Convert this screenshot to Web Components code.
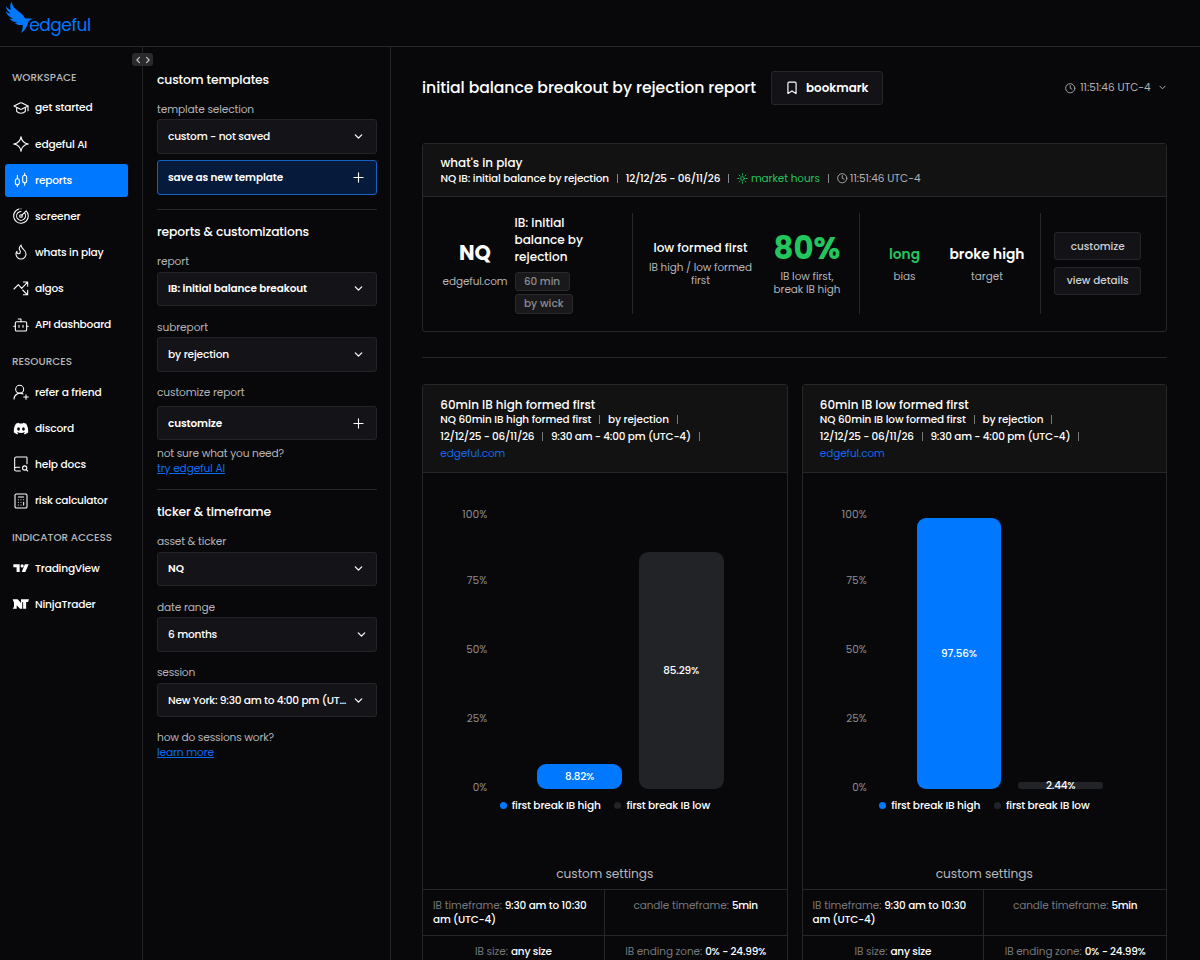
<!DOCTYPE html>
<html lang="en">
<head>
<meta charset="utf-8">
<title>edgeful</title>
<style>
html,body{margin:0;height:100%;overflow:hidden;background:#08080a;color:#fff;font-family:Poppins,Inter,sans-serif;font-size:12px}
</style>
</head>
<body>
<edge-app></edge-app>
<script>
const define=(name,cls)=>customElements.define(name,cls);
const render=(el,html)=>{if(!el.shadowRoot)el.attachShadow({mode:'open'}).innerHTML=html;};

/* Single-line text fitted to a fixed measure: size first, tracking for the rest. */
define('fit-text',class extends HTMLElement{
  connectedCallback(){
    const w=parseFloat(this.getAttribute('w'));
    render(this,`<style>:host{display:inline-block;white-space:pre;flex:none;width:${w}px;text-decoration:inherit}span{display:inline-block;text-decoration:inherit}</style><span><slot></slot></span>`);
    const s=this.shadowRoot.querySelector('span');
    const n=s.getBoundingClientRect().width;
    if(!n)return;
    const k=Math.min(1.05,Math.max(.95,w/n));
    s.style.fontSize=(parseFloat(getComputedStyle(this).fontSize)*k).toFixed(2)+'px';
    const m=s.getBoundingClientRect().width;
    s.style.letterSpacing=((w-m)/this.textContent.length).toFixed(3)+'px';
  }
});
const t=(w,text)=>`<fit-text w="${w}">${text}</fit-text>`;

const ICONS={
  cap:'<path d="M22.500 9 13.500 4.400a3.500 3.500 0 0 0-3 0L1.500 9l9 4.600a3.500 3.500 0 0 0 3 0z"/><path d="M22.500 9v7M5.500 11.500v5.500c1.500 1.800 3.800 2.800 6.500 2.800s5-1 6.500-2.800v-5.500"/>',
  spark:'<path d="M12 1c1 7 4 10 11 11-7 1-10 4-11 11-1-7-4-10-11-11 7-1 10-4 11-11z"/>',
  candles:'<path d="M6.500 5v5M6.500 19v3M17.500 2v3M17.500 16v4"/><rect x="3.500" y="10" width="6" height="9" rx="3"/><rect x="14.500" y="5" width="6" height="11" rx="3"/>',
  radar:'<path d="M19.800 4.200A11 11 0 1 1 3 5.500M3.500 5.500h.01M1.500 9A11 11 0 0 1 9 1.500M12 1h.01M16.900 7.100a6.700 6.700 0 1 1-9.800.3M8 6.700A6.700 6.700 0 0 1 12 5.300M13.400 10.600l6.400-6.400"/><circle cx="12" cy="12" r="2"/>',
  flame:'<path d="M8.500 14.500A2.500 2.500 0 0 0 11 12c0-1.400-.5-2-1-3-1.100-2.100-.2-5.100 2-7.500.5 3 2 5.400 4 7s3.500 4 3.500 6.500a7.500 7.500 0 1 1-15 0c0-1.700.4-3 1.500-4a2.500 2.500 0 0 0 2.500 3.500z"/>',
  algo:'<path d="M1.500 13.500 8 7l5 5.500L21.500 3.500M15.500 3H22v6.500M14.500 15 21 21.500M15.500 22H22v-6.500"/>',
  bot:'<path d="M12 7V3H8"/><rect x="3.500" y="7" width="17" height="14" rx="2"/><path d="M1 14h2.500M20.500 14H23M9 12.500v3M15 12.500v3"/>',
  user:'<path d="M1.500 22.500a9 9 0 0 1 13.500-7.500"/><circle cx="10" cy="8" r="6"/><path d="M19.500 16v7M23 19.500h-7"/>',
  docs:'<path d="M11 22.500H5a2.500 2.500 0 0 1 0-5.500H10M2.500 19.500V4A2.500 2.500 0 0 1 5 1.500h15a1 1 0 0 1 1 1v9"/><circle cx="17.500" cy="18" r="3.200"/><path d="m22 22.500-2.200-2.200"/>',
  calc:'<rect x="3" y="1.500" width="18" height="21" rx="2"/><path d="M8 6h8M16 14v4M8 10h.01M12 10h.01M16 10h.01M8 14h.01M12 14h.01M8 18h.01M12 18h.01"/>',
  discord:'<path fill="currentColor" stroke="none" fill-rule="evenodd" d="M19.500 5.400A17 17 0 0 0 15.300 4l-.7 1.300a16 16 0 0 0-5.200 0L8.700 4a17 17 0 0 0-4.200 1.400C1.700 10 .9 14.400 1.300 18.700A17 17 0 0 0 6.500 21.600l1.200-2.100-1.800-1 .5-.4a12.600 12.600 0 0 0 11.200 0l.5.400-1.800 1 1.200 2.100a17 17 0 0 0 5.200-2.900c.5-5-.7-9.400-3.200-13.300zM8.300 16c-1.100 0-2-1.100-2-2.500s.9-2.500 2-2.500 2 1.100 2 2.500-.9 2.500-2 2.500zm7.400 0c-1.100 0-2-1.100-2-2.500s.9-2.500 2-2.500 2 1.100 2 2.500-.9 2.500-2 2.500z"/>',
  tv:'<g fill="currentColor" stroke="none"><path d="M.500 6.500h9.500v11.500H5.400v-7H.500zM17.800 6.500H23.500L18.500 18h-5.400z"/><circle cx="13.700" cy="8.900" r="2.400"/></g>',
  nt:'<g fill="currentColor" stroke="none"><path d="M-.5 5H7l5 5.500V5h12l-1.500 4h-2.800v10h-4.500V9.500h-1.400V19h-3.300l-5-5v5H-.5l2-3v-6z"/></g>',
  down:'<path d="m5 8.500 7 7 7-7"/>',
  plus:'<path d="M2 12h20M12 2v20"/>',
  mark:'<path d="M19 21.500l-7-4.500-7 4.500V4a2 2 0 0 1 2-2h10a2 2 0 0 1 2 2z"/>',
  clock:'<circle cx="12" cy="12" r="10.500"/><path d="M12 6v6l4 2"/>',
  sun:'<circle cx="12" cy="12" r="4"/><path d="M12 1.500v3M12 19.500v3M1.500 12h3M19.500 12h3M4.500 4.500l2 2M17.500 17.500l2 2M4.500 19.500l2-2M17.500 6.500l2-2"/>',
  code:'<path d="m6 7.500-4.500 4.500 4.500 4.500M18 7.500l4.500 4.500-4.500 4.500"/>'
};
define('edge-icon',class extends HTMLElement{
  connectedCallback(){
    const s=this.getAttribute('size')||16,k=this.getAttribute('stroke')||2;
    render(this,`<style>:host{display:block;flex:none;width:${s}px;height:${s}px}svg{display:block;overflow:visible}</style>
    <svg width="${s}" height="${s}" viewBox="0 0 24 24" fill="none" stroke="currentColor" stroke-width="${k}" stroke-linecap="round" stroke-linejoin="round">${ICONS[this.getAttribute('name')]}</svg>`);
  }
});
const icon=(n,s,k)=>`<edge-icon name="${n}" size="${s}" stroke="${k||2}"></edge-icon>`;

define('edge-header',class extends HTMLElement{
  connectedCallback(){render(this,`<style>
    :host{display:flex;height:46px;border-bottom:1px solid #27272a;box-sizing:content-box;color:#0078ff;padding-left:5px}
    svg{display:block;margin-top:1px}
    .w{font-weight:400;font-size:17.800px;line-height:24px;margin:13px 0 0 -3.800px}
  </style>
  <svg width="28" height="33" viewBox="0 0 28 33" fill="currentColor"><path d="M6.500 .8C8 7.500 12.500 9.500 17 13.200c1.700 1.400 2.600 2.900 3.300 4.600 2-.9 4.700-.8 7.700.3-2.600.3-4.300 1.500-4.900 3.600-.9 3.700-2.600 7.200-7.100 10.300 1.400-3 2-5.800 1.700-8.200-2.900.8-6 0-8.300-2 1.300.3 2.200.1 3-.3-3.300-.4-6.700-2-8.300-4.600 1.600.9 2.900 1.100 4.500.9C5 16.300 1.500 13.700 .8 10.300c1.700 1.500 3 2.100 4.800 2.200C3 10.500 1 8.300 .9 5.200c1.500 1.900 3 3 5 3.700C4.900 6 5 3.200 6.500 .8z"/></svg>
  <div class="w">${t(61.5,'edgeful')}</div>`);}
});

define('nav-item',class extends HTMLElement{
  connectedCallback(){render(this,`<style>
    :host{display:flex;align-items:center;gap:6px;height:33px;margin:0 14px 3.170px 5px;padding-left:8px;border-radius:3px;font-size:11.200px;font-weight:500;color:#fff}
    :host([active]){background:#0078ff}
    div{padding-top:.6px}
  </style>${icon(this.getAttribute('icon'),16,1.6)}<div><slot></slot></div>`);}
});
define('side-nav',class extends HTMLElement{
  connectedCallback(){
    const it=(i,w,n,a='')=>`<nav-item icon="${i}" ${a}>${t(w,n)}</nav-item>`;
    render(this,`<style>
    :host{display:block;border-right:1px solid #232326;padding-top:11.500px;box-sizing:border-box;width:143px}
    h4{margin:0;height:31.200px;box-sizing:border-box;padding:11px 0 0 12px;font-size:10.500px;line-height:16px;font-weight:500;color:#b8b8bc}
    .g{padding-top:1.500px;margin-bottom:-1.300px}
    </style>
    <h4>${t(64.5,'WORKSPACE')}</h4><div class="g">
    ${it('cap',57.5,'get started')}${it('spark',52,'edgeful AI')}${it('candles',37,'reports','active')}${it('radar',45.5,'screener')}${it('flame',68.500,'whats in play')}${it('algo',28.5,'algos')}${it('bot',76,'API dashboard')}</div>
    <h4>${t(60,'RESOURCES')}</h4><div class="g">
    ${it('user',66.5,'refer a friend')}${it('discord',39,'discord')}${it('docs',51,'help docs')}${it('calc',72.500,'risk calculator')}</div>
    <h4>${t(100,'INDICATOR ACCESS')}</h4><div class="g">
    ${it('tv',64.5,'TradingView')}${it('nt',60.500,'NinjaTrader')}</div>`);}
});

define('select-box',class extends HTMLElement{
  connectedCallback(){
    const ic=this.getAttribute('icon')||'down';
    render(this,`<style>
    :host{display:flex;align-items:center;justify-content:space-between;height:34.600px;box-sizing:border-box;border:1px solid #242428;border-radius:3px;background:#141418;padding:0 12px 0 10px;font-size:11.200px;font-weight:500;color:#fff}
    :host([primary]){background:#061b3b;border-color:#1760c4}
    :host([wide]){padding-right:9px}
    :host([strong]){font-weight:600;font-size:11px}
    </style><slot></slot>${ic=='plus'?icon('plus',11,2.400):icon('down',11,2.800)}`);}
});
define('form-field',class extends HTMLElement{
  connectedCallback(){render(this,`<style>
    :host{display:block;margin-bottom:9.500px}
    .l{height:21.500px;line-height:22px;font-size:11.200px;color:#b4b4b8}
    </style><div class="l"><slot name="label"></slot></div><slot></slot>`);}
});
define('config-panel',class extends HTMLElement{
  connectedCallback(){
    const f=(lw,l,w,v,a='')=>`<form-field><span slot="label">${t(lw,l)}</span><select-box ${a}>${t(w,v)}</select-box></form-field>`;
    render(this,`<style>
    :host{display:block;width:248px;box-sizing:border-box;border-right:1px solid #27272a;padding:0 13px 0 14px;font-size:11.500px}
    section{border-bottom:1px solid #27272a;box-sizing:border-box}
    .s1{height:162.500px;padding-top:22px}.s2{height:280px;padding-top:12.300px}.s3{padding-top:12.300px;border:0}
    h3{margin:0 0 8.300px;font-size:13px;font-weight:500;line-height:20px}
    .s1 h3{padding-top:.5px;margin-bottom:8px}
    .bt{margin-top:-3px}
    .note{line-height:14.200px;color:#b4b4b8;font-size:11.200px}
    a{color:#0a6cf5;text-decoration:underline;display:block;margin-top:-.3px}
    </style>
    <section class="s1"><h3>${t(112,'custom templates')}</h3>${f(97,'template selection',102,'custom - not saved')}<select-box primary strong class="bt" icon="plus">${t(115,'save as new template')}</select-box></section>
    <section class="s2"><h3>${t(152,'reports &amp; customizations')}</h3>${f(32,'report',139,'IB: initial balance breakout','strong')}
    ${f(51,'subreport',61,'by rejection')}
    <form-field style="margin-bottom:0"><span slot="label">${t(87.5,'customize report')}</span><select-box strong icon="plus" style="margin-top:3px">${t(54,'customize')}</select-box></form-field>
    <div class="note" style="margin-top:5.500px">${t(127,'not sure what you need?')}<a>${t(68,'try edgeful AI')}</a></div></section>
    <section class="s3"><h3>${t(114,'ticker &amp; timeframe')}</h3>${f(69,'asset &amp; ticker',16,'NQ','strong')}${f(58,'date range',49,'6 months','wide')}${f(38,'session',178,'New York: 9:30 am to 4:00 pm (UT…')}
    <div class="note" style="margin-top:12.500px">${t(117,'how do sessions work?')}<a>${t(57,'learn more')}</a></div></section>`);}
});

define('head-button',class extends HTMLElement{
  connectedCallback(){render(this,`<style>
    :host{display:flex;align-items:center;justify-content:center;box-sizing:border-box;border:1px solid #26262a;border-radius:3px;background:#131317;font-weight:500}
    </style><slot></slot>`);}
});
define('title-row',class extends HTMLElement{
  connectedCallback(){render(this,`<style>
    :host{display:flex;align-items:center;height:34.500px;padding-top:23.500px}
    .t{font-size:16.500px;font-weight:500;margin:0 14.500px 0 0}
    head-button{width:112.500px;height:34.500px;gap:7px;font-size:12.500px;font-weight:600}
    .c{margin-left:auto;display:flex;align-items:center;gap:5px;color:#b4b4b8;font-size:11px;margin-right:.3px}
    .c :last-child{margin-left:2px}
    </style><div class="t">${t(334,'initial balance breakout by rejection report')}</div>
    <head-button>${icon('mark',14,2)}${t(62.5,'bookmark')}</head-button>
    <div class="c">${icon('clock',10.5,2)}${t(70.5,'11:51:46 UTC-4')}${icon('down',9,2.600)}</div>`);}
});
define('tag-pill',class extends HTMLElement{
  connectedCallback(){render(this,`<style>:host{display:flex;width:max-content;align-items:center;height:19.500px;box-sizing:border-box;padding:0 8.500px;border:1px solid #29292b;background:#19191b;border-radius:3px;color:#8c8c90;font-size:11px;font-weight:500}</style><slot></slot>`);}
});
define('play-card',class extends HTMLElement{
  connectedCallback(){render(this,`<style>
    :host{display:block;box-sizing:border-box;height:188.500px;margin-top:38px;border:1px solid #27272a;border-radius:3px}
    header{height:52.500px;box-sizing:border-box;background:#121212;border-bottom:1px solid #27272a;padding:11px 0 0 17.500px}
    .h{font-size:12.500px;line-height:16px;font-weight:500}
    .m{display:flex;align-items:center;font-size:11px;line-height:14px;height:14px;font-weight:500}
    i{width:1px;height:9px;background:#8a8a8e;margin:0 7.700px 0 8px}
    .gr{color:#22c55e}.mu{color:#b4b4b8}
    .m .gr,.m .mu{font-weight:400}
    .body{display:grid;grid-template-columns:209.700px 227.500px 180.500px 1fr;height:100px;margin-top:16.500px}
    .body>div{display:flex;box-sizing:border-box;border-right:1px solid #27272a}
    .body>div:last-child{border:0}
    .st{display:flex;flex-direction:column;align-items:center}
    .n{font-size:11px;line-height:13.600px;color:#b4b4b8;font-weight:400}
    .b{font-weight:500;font-size:12.500px;line-height:17.300px}
    head-button{width:87px;height:28px;font-size:11px;color:#cfcfd2}
    </style>
    <header><div class="h">${t(82,"what's in play")}</div>
    <div class="m">${t(168.5,'NQ IB: initial balance by rejection')}<i></i>${t(94.5,'12/12/25 - 06/11/26')}<i></i><span class="gr">${icon('sun',11,2)}</span><span class="gr" style="margin-left:3px">${t(69,'market hours')}</span><i></i><span class="mu">${icon('clock',10.5,2)}</span><span class="mu" style="margin-left:3px">${t(70.5,'11:51:46 UTC-4')}</span></div></header>
    <div class="body">
    <div style="padding-left:19.500px;gap:7px"><div class="st" style="padding-top:26px"><div style="font-size:20px;font-weight:700;line-height:28px">${t(32,'NQ')}</div><div class="n" style="margin-top:7.500px">${t(65,'edgeful.com')}</div></div>
      <div><div class="b" style="padding-top:.5px">${t(50,'IB: initial')}<br>${t(68.500,'balance by')}<br>${t(53,'rejection')}</div><tag-pill style="margin-top:6.500px">${t(36,'60 min')}</tag-pill><tag-pill style="margin-top:2.700px">${t(39.500,'by wick')}</tag-pill></div></div>
    <div style="padding-left:16.300px;gap:21.500px"><div class="st" style="padding-top:26px"><div class="b">${t(94,'low formed first')}</div><div class="n" style="margin-top:4.500px">${t(103,'IB high / low formed')}</div><div class="n" style="margin-top:-.5px">${t(19,'first')}</div></div>
      <div class="st" style="padding-top:15.500px"><div class="gr" style="font-size:32px;font-weight:700;line-height:38px">${t(67,'80%')}</div><div class="n" style="margin-top:2px">${t(53,'IB low first,')}</div><div class="n">${t(67,'break IB high')}</div></div></div>
    <div style="padding-left:28.800px;gap:29.500px"><div class="st" style="padding-top:31px"><div class="b gr" style="font-size:14px;font-weight:600;line-height:20px">${t(31,'long')}</div><div class="n" style="margin-top:4.500px">${t(22,'bias')}</div></div>
      <div class="st" style="padding-top:31px"><div class="b" style="font-size:14px;font-weight:600;line-height:20px">${t(75,'broke high')}</div><div class="n" style="margin-top:4.500px">${t(32,'target')}</div></div></div>
    <div style="flex-direction:column;padding:19px 0 0 13.500px;gap:6.500px"><head-button>${t(54,'customize')}</head-button><head-button>${t(62,'view details')}</head-button></div>
    </div>`);}
});

define('chart-card',class extends HTMLElement{
  connectedCallback(){
    const side=this.getAttribute('side'),v=this.getAttribute('values').split(',').map(Number);
    const [a,b]=side=='high'?[155,151]:[149,146];
    const bar=(x,c)=>`<div class="bar" style="height:${x*2.77}px;background:${c};border-radius:${x<5?3:9}px">${t(x==8.82?29:x==2.44?29.500:36,x+'%')}</div>`;
    render(this,`<style>
    :host{display:block;box-sizing:border-box;height:640px;border:1px solid #27272a;border-radius:3px}
    header{height:88px;box-sizing:border-box;background:#121212;border-bottom:1px solid #27272a;padding:12px 0 0 17.300px}
    .h{font-size:12.500px;line-height:16px;font-weight:500}
    .m{display:flex;align-items:center;font-size:11px;height:17.200px;line-height:15px;font-weight:500}
    i{width:1px;height:9px;background:#77777b;margin:0 7.800px}
    .plot{display:flex;height:277px;margin-top:39px}
    .ax{width:64.300px;color:#8c8c90;font-size:11px;margin-top:-4.500px}
    .ax div{display:flex;justify-content:flex-end;line-height:14px;height:69px}
    .bars{display:flex;gap:17px;align-items:flex-end;margin-left:49.900px}
    .bar{width:84.700px;display:flex;align-items:center;justify-content:center;font-size:11px;line-height:13px;font-weight:500}
    .lg{display:flex;align-items:center;margin:8.500px 0 0 76.700px;font-size:11.200px;line-height:16px;font-weight:500}
    .lg b{width:7px;height:7px;border-radius:50%;margin-right:5px}
    .cs{display:flex;justify-content:center;color:#b8b8bc;font-size:12.800px;line-height:18px;margin-top:51.300px}
    .tb{display:grid;grid-template-columns:1fr 1fr;margin-top:6px;font-size:11px;line-height:13.800px}
    .tb>div{box-sizing:border-box;border-top:1px solid #27272a;height:46px;padding:9px 10px;display:flex;justify-content:center;gap:3px}
    .tb>div:nth-child(odd){border-right:1px solid #27272a}
    .tb span{color:#77777b}.tb em{font-style:normal;font-weight:500}
    </style>
    <header><div class="h">${t(a,`60min IB ${side} formed first`)}</div>
    <div class="m" style="height:14.500px">${t(b,`NQ 60min IB ${side} formed first`)}<i></i>${t(61,'by rejection')}<i></i></div>
    <div class="m" style="margin-top:1px">${t(94,'12/12/25 - 06/11/26')}<i></i>${t(140,'9:30 am - 4:00 pm (UTC-4)')}<i></i></div>
    <div class="m" style="color:#1466f0;font-weight:400">${t(65,'edgeful.com')}</div></header>
    <div class="plot"><div class="ax"><div style="height:66.300px">${t(25,'100%')}</div><div>${t(20.5,'75%')}</div><div>${t(21,'50%')}</div><div>${t(20.5,'25%')}</div><div style="height:14px">${t(14.5,'0%')}</div></div><div class="bars">${bar(v[0],'#0078ff')}${bar(v[1],'#222326')}</div></div>
    <div class="lg"><b style="background:#0078ff"></b>${t(89,'first break IB high')}<b style="background:#222326;margin-left:13.800px"></b>${t(83.500,'first break IB low')}</div>
    <div class="cs">${t(97,'custom settings')}</div>
    <div class="tb"><div style="display:block"><span>${t(69,'IB timeframe:')}</span> <em style="margin-left:-.3px">${t(82,'9:30 am to 10:30')}<br>${t(63,'am (UTC-4)')}</em></div>
    <div><span>${t(95.5,'candle timeframe:')}</span><em>${t(26,'5min')}</em></div>
    <div><span>${t(33,'IB size:')}</span><em>${t(41,'any size')}</em></div>
    <div><span>${t(77,'IB ending zone:')}</span><em>${t(61,'0% - 24.99%')}</em></div></div>`);}
});
define('report-view',class extends HTMLElement{
  connectedCallback(){render(this,`<style>
    :host{display:block;flex:1;min-width:0;padding:0 33px 0 31px}
    hr{border:0;height:1px;background:#27272a;margin:25.500px 0 25.700px}
    .g{display:grid;grid-template-columns:1fr 1fr;gap:14px}
    </style><title-row></title-row><play-card></play-card><hr>
    <div class="g"><chart-card side="high" values="8.82,85.29"></chart-card><chart-card side="low" values="97.56,2.44"></chart-card></div>`);}
});
define('edge-app',class extends HTMLElement{
  connectedCallback(){render(this,`<style>
    :host{display:block;height:960px;overflow:hidden;position:relative}
    main{display:flex;height:913px;overflow:hidden}
    .tg{position:absolute;left:132px;top:53px;width:21px;height:13px;border-radius:3px;background:#2a2a2c;color:#c8c8ca;display:flex;align-items:center;justify-content:center}
    </style><edge-header></edge-header><main><side-nav></side-nav><config-panel></config-panel><report-view></report-view></main>
    <div class="tg">${icon('code',14,1.9)}</div>`);}
});
</script>
</body>
</html>
